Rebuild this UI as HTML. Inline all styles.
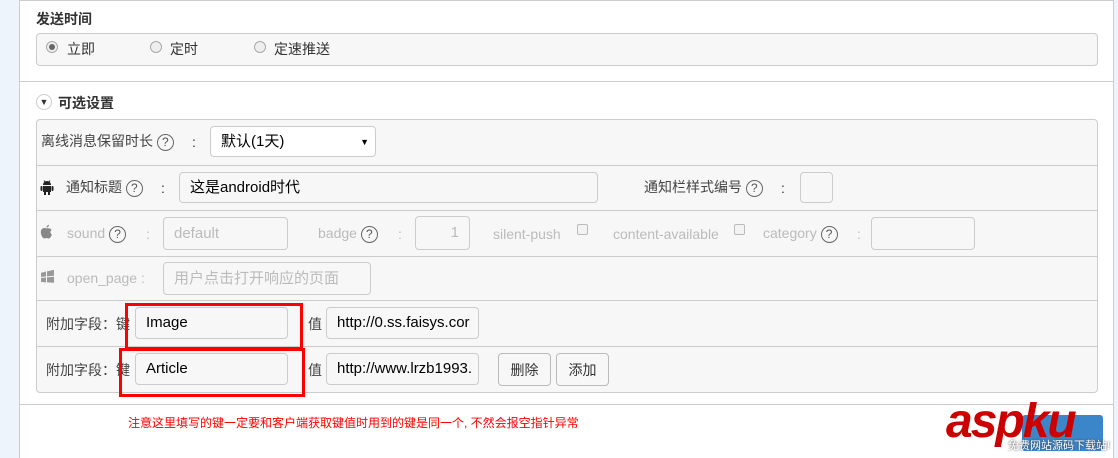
<!DOCTYPE html>
<html><head><meta charset="utf-8"><style>
*{box-sizing:border-box;margin:0;padding:0}
body{width:1118px;height:458px;overflow:hidden;background:#eef4fb;font-family:"Liberation Sans","Noto Sans CJK SC",sans-serif;font-size:14px;color:#333;position:relative}
.a{position:absolute;line-height:16px}
.panel{left:19px;top:0;width:1095px;height:458px;background:#fff;border:1px solid #ccc;border-bottom:none}
.box{border:1px solid #ccc;border-radius:4px;background:#f7f7f7}
.line{height:1px;background:#ccc}
.inp{border:1px solid #ccc;border-radius:4px;background:#f7f7f7;font-size:15px;color:#000;padding-left:10px;display:flex;align-items:center}
.dis{color:#bbb}
.q{display:inline-block;width:17px;height:17px;border:1px solid #666;border-radius:50%;font-size:12px;text-align:center;line-height:15px;color:#555;vertical-align:middle}
.radio{width:12px;height:12px;border-radius:50%;border:1px solid #aaa;background:#eee}
.red{border:3px solid #f00}
.btn{border:1px solid #bbb;border-radius:4px;background:#f7f7f7;display:flex;align-items:center;justify-content:center;font-size:14px}
.cb{width:11px;height:11px;border:1px solid #bbb;border-radius:2px;background:#f3f3f3}
</style></head><body>
<div class="a panel"></div>
<div class="a" style="left:36px;top:11px;font-size:14px;font-weight:bold;color:#333">发送时间</div>
<div class="a box" style="left:36px;top:33px;width:1062px;height:33px"></div>
<div class="a radio" style="left:46px;top:41px"><div style="width:6px;height:6px;border-radius:50%;background:#666;margin:2px"></div></div>
<div class="a" style="left:67px;top:41px">立即</div>
<div class="a radio" style="left:150px;top:41px"></div>
<div class="a" style="left:170px;top:41px">定时</div>
<div class="a radio" style="left:254px;top:41px"></div>
<div class="a" style="left:274px;top:41px">定速推送</div>
<div class="a line" style="left:20px;top:81px;width:1093px"></div>
<div class="a" style="left:36px;top:94px;width:16px;height:16px;border:1px solid #ccc;border-radius:50%;font-size:9px;text-align:center;line-height:14px">▼</div>
<div class="a" style="left:58px;top:95px;font-weight:bold">可选设置</div>
<div class="a box" style="left:36px;top:119px;width:1062px;height:274px"></div>
<div class="a line" style="left:37px;top:165px;width:1060px"></div>
<div class="a line" style="left:37px;top:210px;width:1060px"></div>
<div class="a line" style="left:37px;top:256px;width:1060px"></div>
<div class="a line" style="left:37px;top:300px;width:1060px"></div>
<div class="a line" style="left:37px;top:346px;width:1060px"></div>
<div class="a" style="left:41px;top:133px;color:#444">离线消息保留时长 <span class="q">?</span></div>
<div class="a" style="left:192px;top:134px">:</div>
<div class="a inp" style="left:210px;top:126px;width:166px;height:31px;background:#fff">默认(1天)<span style="position:absolute;right:6px;font-size:9px">▼</span></div>
<svg class="a" style="left:40px;top:180px" width="14" height="16" viewBox="0 0 14 16"><path d="M3 5a4 4 0 0 1 8 0z" fill="#222"/><rect x="3" y="6" width="8" height="6" fill="#222"/><rect x="0.5" y="6" width="2" height="5" rx="1" fill="#222"/><rect x="11.5" y="6" width="2" height="5" rx="1" fill="#222"/><rect x="4" y="11" width="2" height="4" fill="#222"/><rect x="8" y="11" width="2" height="4" fill="#222"/><path d="M4 0.5l1.5 2M10 0.5l-1.5 2" stroke="#222"/></svg>
<div class="a" style="left:66px;top:179px;color:#444">通知标题 <span class="q">?</span></div>
<div class="a" style="left:161px;top:180px">:</div>
<div class="a inp" style="left:179px;top:172px;width:419px;height:31px">这是android时代</div>
<div class="a" style="left:644px;top:179px;color:#444">通知栏样式编号 <span class="q">?</span></div>
<div class="a" style="left:781px;top:180px">:</div>
<div class="a inp" style="left:800px;top:172px;width:33px;height:31px"></div>
<svg class="a" style="left:40px;top:224px" width="13" height="16" viewBox="0 0 13 16"><path d="M6.5 4.5C5 3.5 1 3.5 0.8 8c0 3 2 6.5 3.5 6.5 1 0 1.2-.5 2.2-.5s1.2.5 2.2.5c1.5 0 2.7-2.5 3.2-4-1.8-.8-2-3.6-.2-4.6-.8-1.4-3.2-2-5.2-1.4z" fill="#888"/><path d="M6.5 3.8c0-1.5 1-2.8 2.5-3-0.1 1.6-1 2.8-2.5 3z" fill="#888"/></svg>
<div class="a dis" style="left:67px;top:225px">sound <span class="q">?</span></div>
<div class="a dis" style="left:146px;top:226px">:</div>
<div class="a inp dis" style="left:163px;top:217px;width:125px;height:33px;color:#bbb">default</div>
<div class="a dis" style="left:318px;top:225px">badge <span class="q">?</span></div>
<div class="a dis" style="left:398px;top:226px">:</div>
<div class="a inp dis" style="left:415px;top:216px;width:55px;height:34px;color:#bbb;justify-content:flex-end;padding-right:10px">1</div>
<div class="a dis" style="left:493px;top:226px">silent-push</div>
<div class="a cb" style="left:577px;top:224px"></div>
<div class="a dis" style="left:613px;top:226px">content-available</div>
<div class="a cb" style="left:734px;top:224px"></div>
<div class="a dis" style="left:763px;top:225px">category <span class="q">?</span></div>
<div class="a dis" style="left:857px;top:226px">:</div>
<div class="a inp" style="left:871px;top:217px;width:104px;height:33px"></div>
<svg class="a" style="left:40px;top:270px" width="15" height="14" viewBox="0 0 15 14"><path d="M1 3l5-1v5H1zM7 2l7-1v6H7zM1 8h5v5l-5-1zM7 8h7v6l-7-1z" fill="#999" transform="skewY(-5)"/></svg>
<div class="a dis" style="left:67px;top:270px">open_page :</div>
<div class="a inp" style="left:163px;top:262px;width:208px;height:33px;color:#bbb">用户点击打开响应的页面</div>
<div class="a" style="left:46px;top:316px;color:#444">附加字段：键</div>
<div class="a inp" style="left:135px;top:307px;width:153px;height:32px">Image</div>
<div class="a" style="left:308px;top:316px;color:#444">值</div>
<div class="a inp" style="left:326px;top:307px;width:153px;height:32px">http://0.ss.faisys.cor</div>
<div class="a" style="left:46px;top:362px;color:#444">附加字段：键</div>
<div class="a inp" style="left:135px;top:353px;width:153px;height:32px">Article</div>
<div class="a" style="left:308px;top:362px;color:#444">值</div>
<div class="a inp" style="left:326px;top:353px;width:153px;height:32px">http://www.lrzb1993.</div>
<div class="a btn" style="left:498px;top:353px;width:53px;height:33px">删除</div>
<div class="a btn" style="left:556px;top:353px;width:53px;height:33px">添加</div>
<div class="a red" style="left:125px;top:303px;width:178px;height:47px"></div>
<div class="a red" style="left:119px;top:348px;width:186px;height:49px"></div>
<div class="a line" style="left:20px;top:404px;width:1093px"></div>
<div class="a" style="left:128px;top:415px;color:#f00;font-size:12px">注意这里填写的键一定要和客户端获取键值时用到的键是同一个, 不然会报空指针异常</div>
<div class="a" style="left:1022px;top:415px;width:81px;height:36px;background:#3b86c8;border-radius:3px"></div>
<div class="a" style="left:946px;top:398px;color:#c00;font-size:48px;line-height:48px;font-weight:bold;font-style:italic;letter-spacing:-2px">aspku</div>
<div class="a" style="left:1008px;top:438px;color:#fff;font-size:11px;text-shadow:0 0 2px #333">免费网站源码下载站!</div>
</body></html>
